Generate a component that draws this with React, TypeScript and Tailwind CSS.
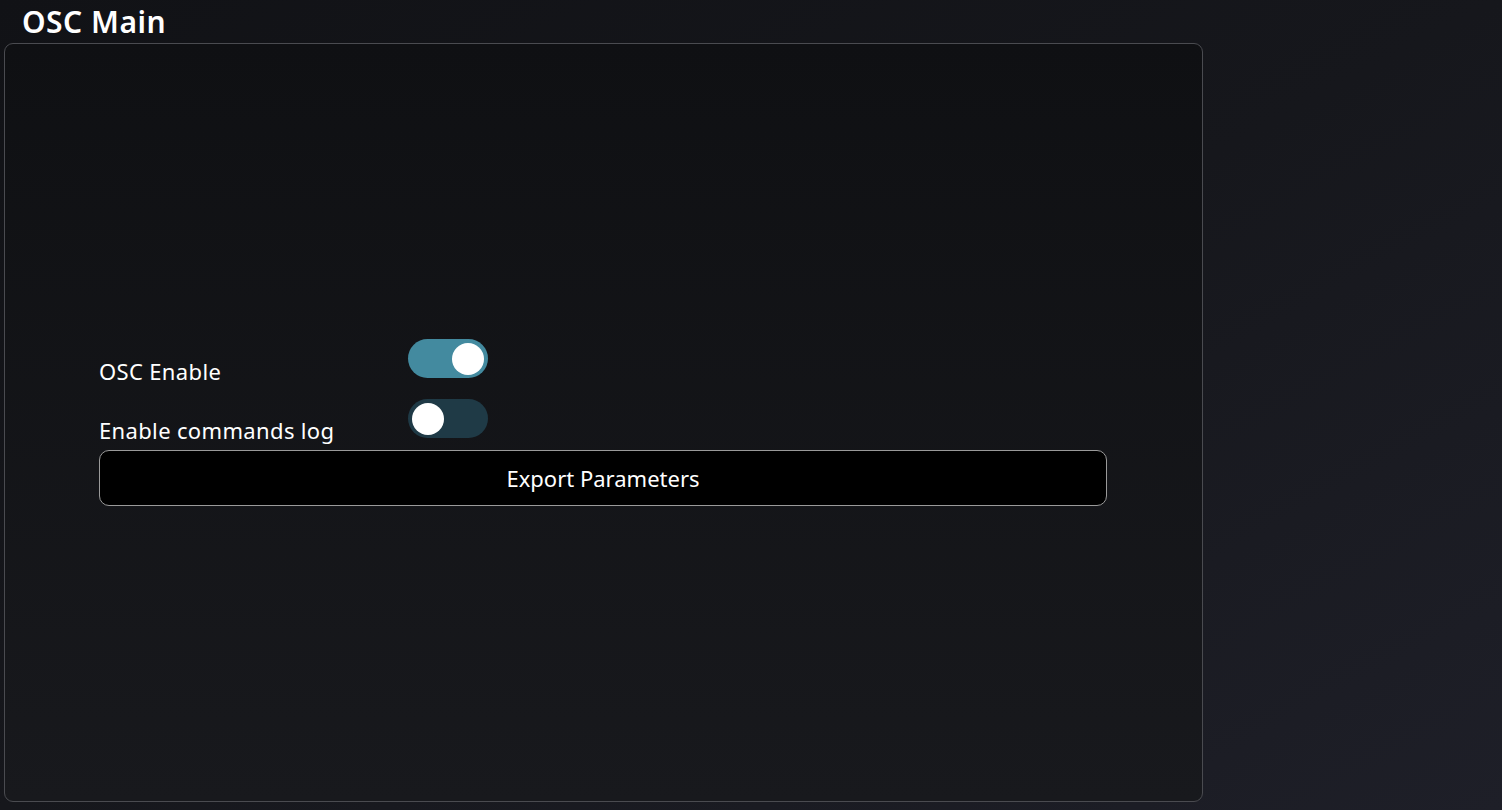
import { useState } from "react";

function Toggle({ on, onChange }: { on: boolean; onChange: () => void }) {
  return (
    <button
      onClick={onChange}
      className={`w-[80px] h-[39px] rounded-full flex items-center px-[4px] shrink-0 ${
        on ? "bg-[#438a9f] justify-end" : "bg-[#1f3a46] justify-start"
      }`}
    >
      <span className="block w-[32px] h-[32px] rounded-full bg-white" />
    </button>
  );
}

export default function App() {
  const [oscEnabled, setOscEnabled] = useState(true);
  const [logEnabled, setLogEnabled] = useState(false);

  return (
    <div
      className="w-[1502px] h-[810px] overflow-hidden bg-gradient-to-br from-[#111216] via-[#16171c] to-[#1e1f28] text-white flex flex-col"
      style={{ fontFamily: '"Noto Sans", "Open Sans", sans-serif' }}
    >
      <h1 className="pl-[22px] pt-[4px] text-[30px] leading-[36px] font-semibold tracking-[0.5px]">OSC Main</h1>

      <div className="mt-[3px] ml-[4px] w-[1199px] h-[759px] rounded-[9px] border border-[#4a4b50] bg-gradient-to-b from-[#0f1013] to-[#18191d] flex flex-col justify-center px-[94px]">
        {/* OSC Enable */}
        <div className="flex items-start h-[60px]">
          <span className="w-[309px] mt-[18px] text-[22px] leading-[28px] tracking-[0.35px]">OSC Enable</span>
          <Toggle on={oscEnabled} onChange={() => setOscEnabled(!oscEnabled)} />
        </div>

        {/* Commands log */}
        <div className="flex items-start h-[51px]">
          <span className="w-[309px] mt-[17px] text-[22px] leading-[28px] tracking-[0.35px]">Enable commands log</span>
          <Toggle on={logEnabled} onChange={() => setLogEnabled(!logEnabled)} />
        </div>

        <button className="w-[1008px] h-[56px] rounded-[10px] border border-[#9a9a9a] bg-black text-[22px]">
          Export Parameters
        </button>
      </div>
    </div>
  );
}
